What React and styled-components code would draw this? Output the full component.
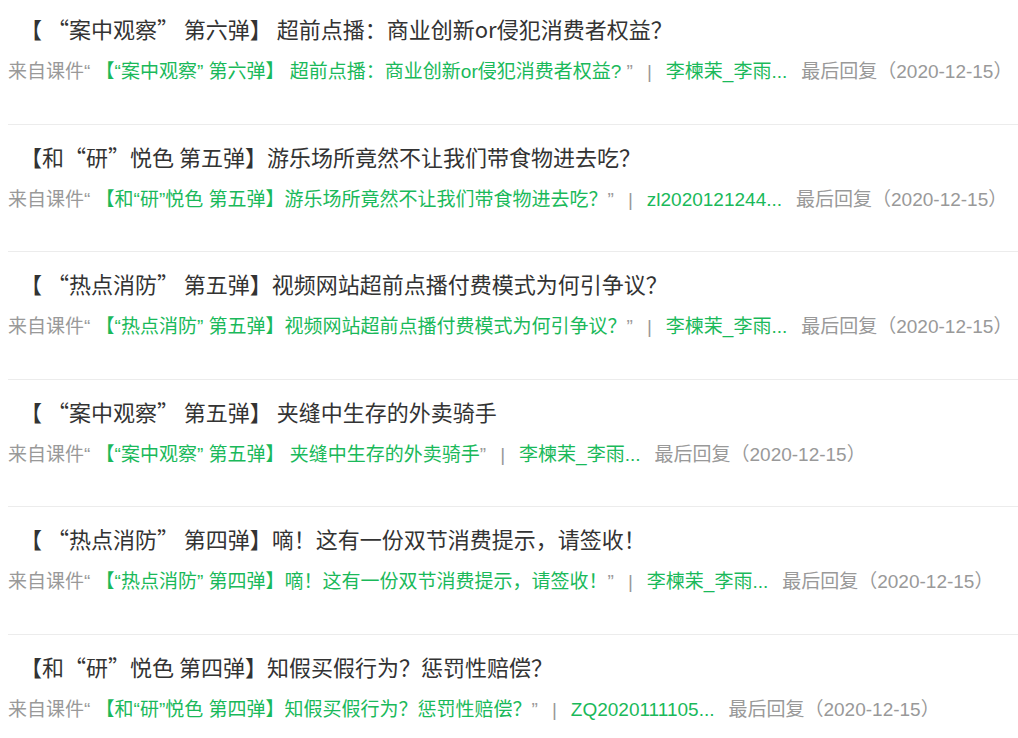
import React from "react";
import styled, { createGlobalStyle } from "styled-components";

const GlobalStyle = createGlobalStyle`
  body {
    margin: 0;
    background: #fff;
  }
`;

const List = styled.ul`
  list-style: none;
  margin: 0;
  padding: 0 0 0 8px;
`;

const Item = styled.li`
  padding: 16px 0 37.5px;
  border-bottom: 1px solid #ececec;
  &:first-child {
    padding-top: 13px;
  }
`;

const Title = styled.div`
  font-family: "Noto Sans CJK SC", "Liberation Sans", sans-serif;
  font-size: 22px;
  line-height: 30px;
  color: #333;
  padding-left: 12px;
  white-space: nowrap;
`;

const Meta = styled.div`
  margin-top: 15px;
  font-family: "Liberation Sans", "Noto Sans CJK SC", sans-serif;
  font-size: 19px;
  line-height: 28px;
  color: #999;
  white-space: nowrap;
`;

const Link = styled.span`
  color: #1ab95a;
`;

const Sep = styled.span`
  margin: 0 14px;
`;

const Author = styled.span`
  color: #1ab95a;
  margin-right: 14px;
`;

const posts = [
  {
    title: "【 “案中观察” 第六弹】 超前点播：商业创新or侵犯消费者权益？",
    course: "【“案中观察” 第六弹】 超前点播：商业创新or侵犯消费者权益? ",
    author: "李楝茉_李雨...",
  },
  {
    title: "【和“研”悦色 第五弹】游乐场所竟然不让我们带食物进去吃？",
    course: "【和“研”悦色 第五弹】游乐场所竟然不让我们带食物进去吃？",
    author: "zl2020121244...",
  },
  {
    title: "【 “热点消防” 第五弹】视频网站超前点播付费模式为何引争议？",
    course: "【“热点消防” 第五弹】视频网站超前点播付费模式为何引争议？",
    author: "李楝茉_李雨...",
  },
  {
    title: "【 “案中观察” 第五弹】 夹缝中生存的外卖骑手",
    course: "【“案中观察” 第五弹】 夹缝中生存的外卖骑手",
    author: "李楝茉_李雨...",
  },
  {
    title: "【 “热点消防” 第四弹】嘀！这有一份双节消费提示，请签收！",
    course: "【“热点消防” 第四弹】嘀！这有一份双节消费提示，请签收！",
    author: "李楝茉_李雨...",
  },
  {
    title: "【和“研”悦色 第四弹】知假买假行为？惩罚性赔偿？",
    course: "【和“研”悦色 第四弹】知假买假行为？惩罚性赔偿？",
    author: "ZQ2020111105...",
  },
];

export default function App() {
  return (
    <>
      <GlobalStyle />
      <List>
        {posts.map((p, i) => (
          <Item key={i}>
            <Title>{p.title}</Title>
            <Meta>
              来自课件“ <Link>{p.course}</Link>”<Sep>|</Sep>
              <Author>{p.author}</Author>
              最后回复（2020-12-15）
            </Meta>
          </Item>
        ))}
      </List>
    </>
  );
}
